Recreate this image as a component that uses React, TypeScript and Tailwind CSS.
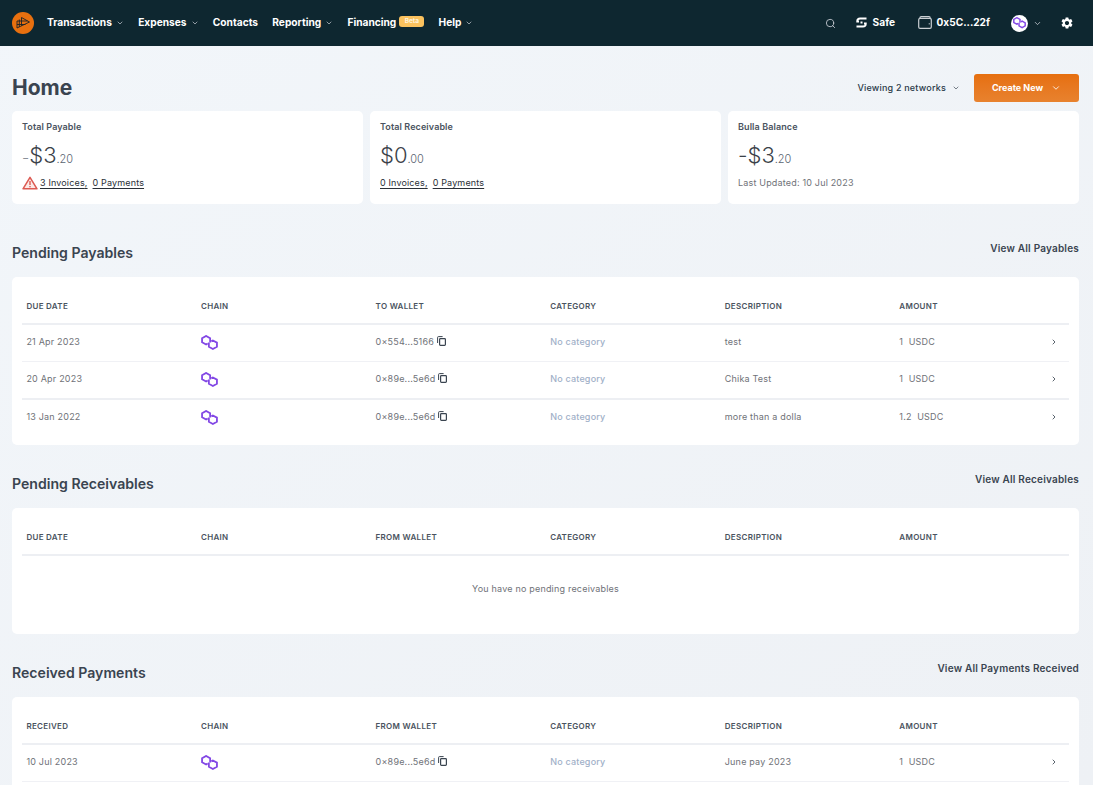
import React from "react";
import { ChevronDown, ChevronRight, Search } from "lucide-react";
import { MdSettings } from "react-icons/md";

const font = { fontFamily: "Inter, 'Liberation Sans', sans-serif" };

function Polygon({ size = 17, color = "#8247e5", sw = 1.7 }: { size?: number; color?: string; sw?: number }) {
  return (
    <svg width={size} height={(size * 14) / 16} viewBox="0 0 16 14" fill="none" stroke={color} strokeWidth={sw} strokeLinejoin="miter">
      <path d="M8.6 7 V3 L4.8 .9 L1 3 V6.8 L4.8 8.9 L6.3 8" />
      <path d="M7.4 7 V11 L11.2 13.1 L15 11 V7.2 L11.2 5.1 L9.7 6" />
    </svg>
  );
}

function Logo() {
  return (
    <svg width="22" height="22" viewBox="0 0 22 22">
      <circle cx="11" cy="11" r="11" fill="#e8700f" />
      <g fill="none" stroke="#1b2228" strokeWidth="0.9">
        <path d="M9.5 5.5 L17.5 10 L5 16 V9 H15.5" />
        <path d="M7.3 7.5 V15 M9.5 5.5 V13.8 M5 12.5 H13.5" />
      </g>
    </svg>
  );
}

function SafeIcon() {
  return (
    <svg width="11" height="11" viewBox="0 0 11 11" fill="none" stroke="#fff" strokeWidth="1.8">
      <path d="M10.5 1.5 H4 Q1.2 1.5 1.2 4 V4.5 H3" />
      <path d="M.5 9.5 H7 Q9.8 9.5 9.8 7 V6.5 H8" />
      <rect x="4.5" y="4.5" width="2" height="2" fill="#fff" stroke="none" />
    </svg>
  );
}

function WalletIcon() {
  return (
    <svg width="14" height="13" viewBox="0 0 14 13" fill="none" stroke="#c9cfd3" strokeWidth="1.2">
      <rect x=".7" y="2.4" width="12.6" height="10" rx="1.4" />
      <path d="M2 2.2 V1.8 Q2 .7 3.2 .7 H11 Q12.2 .7 12.2 2" />
      <path d="M10.8 7.8 H11.6" strokeWidth="1.4" />
    </svg>
  );
}

function CopyIcon() {
  return (
    <svg width="9" height="10" viewBox="0 0 9 10" fill="none" stroke="#3a4450" strokeWidth="1" className="mb-[1px]">
      <path d="M.6 7 V1.4 Q.6 .6 1.4 .6 H5.6" />
      <rect x="2.6" y="2.6" width="5.8" height="6.8" rx=".8" strokeWidth="1.2" />
    </svg>
  );
}

function NavItem({ label, chevron = true }: { label: string; chevron?: boolean }) {
  return (
    <div className="flex items-center gap-[3px] text-[10.2px] font-bold text-white">
      <span>{label}</span>
      {chevron && <ChevronDown size={8} className="text-gray-300 ml-[1px]" />}
    </div>
  );
}

function Nav() {
  return (
    <header className="h-[46px] shrink-0 bg-[#0e2730] flex items-center pl-[12px] pr-[19px]">
      <Logo />
      <nav className="flex items-center ml-[13px] gap-[14.25px]">
        <NavItem label="Transactions" />
        <NavItem label="Expenses" />
        <NavItem label="Contacts" chevron={false} />
        <NavItem label="Reporting" />
        <div className="flex items-center gap-[3px] text-[10.2px] font-bold text-white">
          <span>Financing</span>
          <span className="bg-[#fbc25e] text-[#fff3d9] rounded-[3px] h-[11px] w-[25px] flex items-center justify-center text-[6.5px] font-bold mb-[3px]">Beta</span>
        </div>
        <NavItem label="Help" />
      </nav>
      <div className="ml-auto flex items-center">
        <Search size={11} strokeWidth={1.8} className="text-gray-300" />
        <div className="flex items-center gap-[6px] ml-[19.5px] text-[10.2px] font-bold text-white"><SafeIcon />Safe</div>
        <div className="flex items-center gap-[5px] ml-[22.5px] text-[10.1px] font-bold text-white">
          <WalletIcon />0x5C...22f
        </div>
        <div className="ml-[21px] w-[17px] h-[17px] rounded-full bg-white flex items-center justify-center"><Polygon size={13} sw={1.8} /></div>
        <ChevronDown size={9} className="text-gray-300 ml-[5px]" />
        <MdSettings size={14} className="text-white ml-[18px]" />
      </div>
    </header>
  );
}

function Warn() {
  return (
    <svg width="16" height="14" viewBox="0 0 16 14" className="mr-[2px]">
      <path d="M8 1.3 L15 12.8 H1 Z" fill="#fbe9e7" stroke="#dc5a52" strokeWidth="1.5" strokeLinejoin="round" />
      <rect x="7.3" y="5" width="1.4" height="4" fill="#dc5a52" />
      <rect x="7.3" y="10" width="1.4" height="1.3" fill="#dc5a52" />
    </svg>
  );
}

function Amount({ sign, main, cents, light }: { sign?: string; main: string; cents: string; light?: boolean }) {
  return (
    <div className="flex items-baseline text-[#3b4249] mt-[6px] h-[26px]">
      {sign && <span className={light ? "text-[16px] font-light text-[#8a9099]" : "text-[21px] font-light text-[#3b4249]"}>{sign}</span>}
      <span className="text-[22px] font-light">{main}</span>
      <span className="text-[11px] font-light text-[#5a6470]">.{cents}</span>
    </div>
  );
}

function Card({ title, children }: { title: string; children: React.ReactNode }) {
  return (
    <div className="bg-white rounded-[5px] h-[93px] pl-[10px] pt-[10px] flex flex-col">
      <div className="text-[9px] leading-[12px] font-semibold text-[#4a5360] tracking-[0.1px]">{title}</div>
      {children}
    </div>
  );
}

function Links({ a, b, warn }: { a: string; b: string; warn?: boolean }) {
  return (
    <div className="flex items-center text-[9px] text-[#2a3038] mt-[11px] h-[14px] tracking-[0.15px]">
      {warn && <Warn />}
      <span className="underline underline-offset-2">{a},</span>
      <span className="underline underline-offset-2 ml-[5px]">{b}</span>
    </div>
  );
}

const gridCols = "grid grid-cols-[174.6px_174.6px_174.6px_174.6px_174.6px_1fr_30px]";

function Header({ cols }: { cols: string[] }) {
  return (
    <div className={`${gridCols} h-[48px] items-center border-b-2 border-[#edeff3] pl-[4.4px] pt-[12px]`}>
      {cols.map((c) => (
        <div key={c} className="text-[8px] font-semibold text-[#4a5360] tracking-[0.3px] uppercase">{c}</div>
      ))}
    </div>
  );
}

type Row = { date: string; wallet: string; desc: string; amt: string };

function Cells({ r }: { r: Row }) {
  return (
    <>
      <div>{r.date}</div>
      <div className="pt-[2px]"><Polygon /></div>
      <div className="flex items-center gap-[3px]">
        <span>{r.wallet}</span>
        <CopyIcon />
      </div>
      <div className="text-[#9fb0c8] font-medium">No category</div>
      <div>{r.desc}</div>
      <div className="whitespace-pre">{r.amt}</div>
      <div className="flex justify-center"><ChevronRight size={8} strokeWidth={2.5} className="text-[#3a4450]" /></div>
    </>
  );
}

const rowText = "items-center pl-[4.4px] pb-[2.5px] text-[9px] text-[#6f7278] tracking-[0.2px]";

function Section({ title, link, mt, children }: { title: string; link: string; mt: string; children: React.ReactNode }) {
  return (
    <section className={mt}>
      <div className="flex items-start justify-between h-[34px]">
        <h2 className="text-[14.1px] leading-[17px] font-semibold text-[#3a4450] pt-[.5px]">{title}</h2>
        <span className="text-[10px] font-semibold text-[#3a4450] leading-[10px] tracking-[0.2px]">{link}</span>
      </div>
      <div className="bg-white rounded-[5px] px-[10px]">{children}</div>
    </section>
  );
}

const payables: Row[] = [
  { date: "21 Apr 2023", wallet: "0×554...5166", desc: "test", amt: "1  USDC" },
  { date: "20 Apr 2023", wallet: "0×89e...5e6d", desc: "Chika Test", amt: "1  USDC" },
  { date: "13 Jan 2022", wallet: "0×89e...5e6d", desc: "more than a dolla", amt: "1.2  USDC" },
];

export default function App() {
  return (
    <div style={font} className="h-screen overflow-hidden flex flex-col bg-gradient-to-br from-[#f2f6fa] to-[#eef1f5]">
      <Nav />
      <main className="px-[12px] pr-[14px]">
        <div className="flex items-center justify-between h-[65px] pt-[19px]">
          <h1 className="text-[21px] font-bold text-[#3a4450] leading-[26px]">Home</h1>
          <div className="flex items-center">
            <span className="text-[9px] font-medium text-[#2a3a48] tracking-[0.2px]">Viewing 2 networks</span>
            <ChevronDown size={8} className="text-[#3a4450] ml-[5.5px]" />
            <button className="ml-[14.5px] w-[105px] h-[28px] rounded-[3px] bg-gradient-to-b from-[#e66f0e] to-[#e8822e] text-white text-[9px] font-bold flex items-center justify-center gap-[8px]">
              Create New <ChevronDown size={10} />
            </button>
          </div>
        </div>
        <div className="grid grid-cols-3 gap-[7px]">
          <Card title="Total Payable">
            <Amount sign="-" main="$3" cents="20" light />
            <Links a="3 Invoices" b="0 Payments" warn />
          </Card>
          <Card title="Total Receivable">
            <Amount main="$0" cents="00" />
            <Links a="0 Invoices" b="0 Payments" />
          </Card>
          <Card title="Bulla Balance">
            <Amount sign="-" main="$3" cents="20" />
            <div className="text-[9px] text-[#6f7278] mt-[11px] h-[14px] flex items-center tracking-[0.18px]">Last Updated: 10 Jul 2023</div>
          </Card>
        </div>

        <Section title="Pending Payables" link="View All Payables" mt="mt-[39px]">
          <Header cols={["Due Date", "Chain", "To Wallet", "Category", "Description", "Amount"]} />
          <div className={`${gridCols} ${rowText} h-[37px] border-b border-[#f0f1f5]`}><Cells r={payables[0]} /></div>
          <div className={`${gridCols} ${rowText} h-[38px] border-b-2 border-[#edeff3]`}><Cells r={payables[1]} /></div>
          <div className={`${gridCols} ${rowText} h-[36px]`}><Cells r={payables[2]} /></div>
          <div className="h-[9px]" />
        </Section>

        <Section title="Pending Receivables" link="View All Receivables" mt="mt-[29px]">
          <Header cols={["Due Date", "Chain", "From Wallet", "Category", "Description", "Amount"]} />
          <div className="h-[78px] flex items-center justify-center text-[9px] text-[#6f7278] tracking-[0.2px] pb-[12px]">You have no pending receivables</div>
        </Section>

        <Section title="Received Payments" link="View All Payments Received" mt="mt-[29px]">
          <Header cols={["Received", "Chain", "From Wallet", "Category", "Description", "Amount"]} />
          <div className={`${gridCols} ${rowText} h-[37px] border-b border-[#f0f1f5]`}>
            <Cells r={{ date: "10 Jul 2023", wallet: "0×89e...5e6d", desc: "June pay 2023", amt: "1  USDC" }} />
          </div>
          <div className="h-[37px]" />
        </Section>
      </main>
    </div>
  );
}
